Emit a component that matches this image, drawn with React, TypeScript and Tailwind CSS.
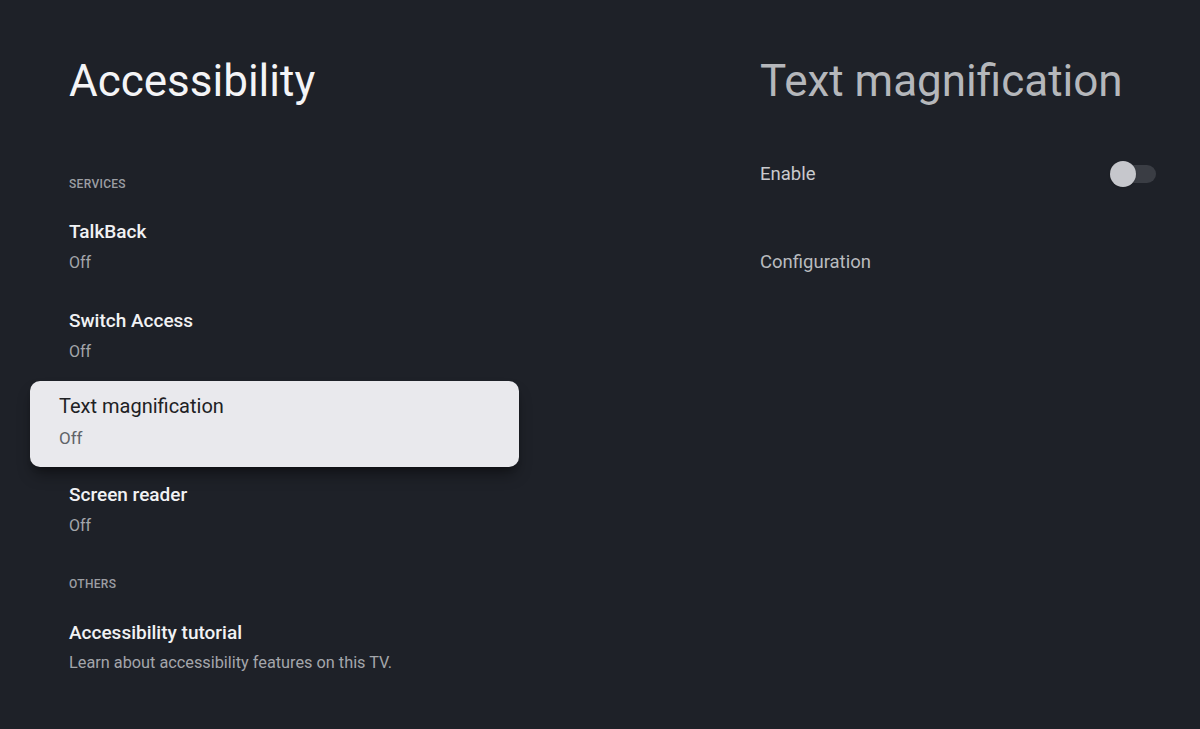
import React from "react";

const font = { fontFamily: "Roboto, 'Noto Sans', sans-serif" };

const Item = ({ title, sub, className = "" }: { title: string; sub: string; className?: string }) => (
  <div className={className}>
    <div className="text-[19px] leading-6 font-medium text-[#f1f2f4]">{title}</div>
    <div className="mt-2 text-[16px] leading-[22px] text-[#a4a6ab]">{sub}</div>
  </div>
);

const Toggle = () => (
  <div className="relative w-[45px] h-[18px] rounded-full bg-[#3a3d44]">
    <div className="absolute -left-[1px] -top-[4px] w-[26px] h-[26px] rounded-full bg-[#c6c7cc] shadow" />
  </div>
);

export default function App() {
  return (
    <div className="flex w-[1200px] h-[729px] overflow-hidden bg-[#1e2128]" style={font}>
      <section className="w-[560px] pl-[69px] pt-[55px] flex flex-col">
        <h1 className="text-[44px] leading-[52px] text-[#f4f4f6]">Accessibility</h1>

        <div className="mt-[69px] text-[12px] leading-4 font-medium tracking-wide text-[#9c9ea3]">SERVICES</div>

        <Item className="mt-[28px]" title="TalkBack" sub="Off" />
        <Item className="mt-[35px]" title="Switch Access" sub="Off" />

        <div className="-ml-[39px] mt-[18px] w-[489px] h-[86px] rounded-[10px] bg-[#e9e9ed] pl-[29px] pt-[13px] shadow-lg shadow-black/40">
          <div className="text-[20px] leading-6 text-[#202124]">Text magnification</div>
          <div className="mt-[9px] text-[17px] leading-[22px] text-[#5f6368]">Off</div>
        </div>

        <Item className="mt-[16px]" title="Screen reader" sub="Off" />

        <div className="mt-[39px] text-[12px] leading-4 font-medium tracking-wide text-[#9c9ea3]">OTHERS</div>

        <div className="mt-[29px]">
          <div className="text-[19px] leading-6 font-medium text-[#f1f2f4]">Accessibility tutorial</div>
          <div className="mt-[7px] text-[16.3px] leading-[22px] text-[#a4a6ab]">Learn about accessibility features on this TV.</div>
        </div>
      </section>

      <section className="ml-[200px] w-[396px] pt-[55px] flex flex-col">
        <h2 className="text-[44px] leading-[52px] text-[#b5b7bb]">Text magnification</h2>
        <div className="mt-[55px] flex items-center justify-between">
          <span className="text-[18.5px] leading-6 text-[#c9cacd]">Enable</span>
          <Toggle />
        </div>
        <div className="mt-[64px] text-[18.5px] leading-6 text-[#b9bbbf]">Configuration</div>
      </section>
    </div>
  );
}
